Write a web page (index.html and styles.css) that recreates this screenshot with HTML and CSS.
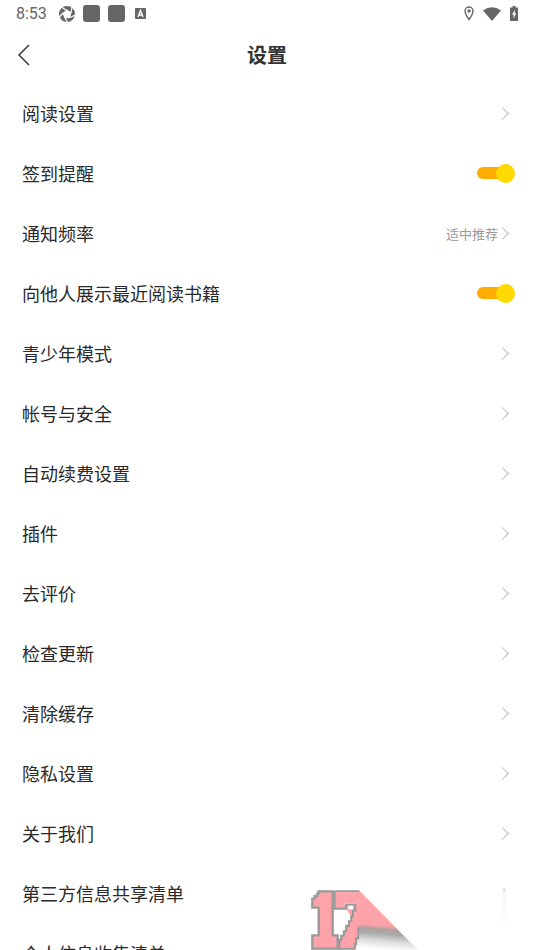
FILE: index.html
```html
<!DOCTYPE html>
<html lang="zh-CN">
<head>
<meta charset="utf-8">
<meta name="viewport" content="width=device-width, initial-scale=1">
<title>设置</title>
<link rel="stylesheet" href="styles.css">
</head>
<body>
<div class="status">
  <span class="time">8:53</span>
  <svg class="ic16" viewBox="0 0 16 16"><circle cx="8" cy="8" r="5.500" fill="none" stroke="#666" stroke-width="5"/><path d="m8 3.500 4.500 3-1.500 5.500-5.500.500L3.500 7z" fill="#fff"/><path d="M8 4.500 3 1.500M12 7l1-6M11 11.500l5.500-2.500M6 12l3 5M4 7l-4 4.500" stroke="#fff" stroke-width="1.200"/></svg>
  <span class="block"></span>
  <span class="block"></span>
  <svg class="ic11" viewBox="0 0 11 11"><rect width="11" height="11" rx="1" fill="#666"/><path d="M3 9 5.500 2.500 8 9M4 7h3" fill="none" stroke="#fff" stroke-width="1.400"/></svg>
  <span class="system">
    <svg width="10" height="15" viewBox="0 0 10 15"><path d="M5 1a4 4 0 0 1 4 4c0 3-4 8.500-4 8.500S1 8 1 5a4 4 0 0 1 4-4z" fill="none" stroke="#666" stroke-width="1.400"/><circle cx="5" cy="5" r="1.700" fill="#666"/></svg>
    <svg width="18" height="14" viewBox="0 0 18 14"><path d="M0 3.500Q9-3 18 3.500L9 14z" fill="#666"/></svg>
    <svg width="8" height="15" viewBox="0 0 8 15"><path d="M2.500 0h3v1.500H8V15H0V1.500h2.500z" fill="#666"/><path d="M5 3.500 2 8.500h1.600V12.500L6.200 7.300H4.700z" fill="#fff"/></svg>
  </span>
</div>
<header class="bar">
  <button class="back" aria-label="返回"><svg width="12" height="22" viewBox="0 0 12 22"><path d="M11 1 1 11l10 10" fill="none" stroke="#333" stroke-width="1.500"/></svg></button>
  <h1>设置</h1>
</header>
<main class="list">
  <a class="row" href="#">阅读设置<i class="arrow"></i></a>
  <label class="row">签到提醒<input class="switch" type="checkbox" checked></label>
  <a class="row" href="#">通知频率<span class="value">适中推荐</span><i class="arrow"></i></a>
  <label class="row">向他人展示最近阅读书籍<input class="switch" type="checkbox" checked></label>
  <a class="row" href="#">青少年模式<i class="arrow"></i></a>
  <a class="row" href="#">帐号与安全<i class="arrow"></i></a>
  <a class="row" href="#">自动续费设置<i class="arrow"></i></a>
  <a class="row" href="#">插件<i class="arrow"></i></a>
  <a class="row" href="#">去评价<i class="arrow"></i></a>
  <a class="row" href="#">检查更新<i class="arrow"></i></a>
  <a class="row" href="#">清除缓存<i class="arrow"></i></a>
  <a class="row" href="#">隐私设置<i class="arrow"></i></a>
  <a class="row" href="#">关于我们<i class="arrow"></i></a>
  <a class="row" href="#">第三方信息共享清单</a>
  <a class="row" href="#">个人信息收集清单</a>
</main>
<svg class="badge" viewBox="0 0 732 240" role="img" aria-label="17">
  <defs>
    <linearGradient id="shade" gradientUnits="userSpaceOnUse" x1="250" y1="164" x2="244" y2="236">
      <stop offset="0" stop-color="#ffa3aa"/>
      <stop offset=".16" stop-color="#b0a0a0"/>
      <stop offset=".35" stop-color="#aaa"/>
      <stop offset=".65" stop-color="#ddd"/>
      <stop offset="1" stop-color="#fff"/>
    </linearGradient>
    <linearGradient id="wisp" x1="0" y1="0" x2="0" y2="1">
      <stop offset="0" stop-color="#ccc"/>
      <stop offset=".1" stop-color="#f6f6f6"/>
      <stop offset="1" stop-color="#fff"/>
    </linearGradient>
  </defs>
  <path d="M206 60 384 240H194V120z" fill="url(#shade)"/>
  <g fill="#ffa3aa" stroke="#999" stroke-width="7">
    <path d="M86 64H128V196H143V236H67V196H86V113H67V86H74V78H82V70H86z"/>
    <path d="M134 64H208M134 64V116H167V104H196V122H189V140H184V154H177V168H169V184H162V198H154V210H148V236H194V222H198V204H204V172"/>
  </g>
  <path d="M137 67H208V170H202V202H195V218H190V233H152V212H158V200H166V187H173V171H181V157H188V143H193V125H200V100H163V112H137z" fill="#ffa3aa"/>
  <path d="M175 107H189V118H175z" fill="#fff"/>
  <path d="M640 56h6l10 124h-26z" fill="url(#wisp)"/>
</svg>
</body>
</html>
```
FILE: styles.css
```css
* { box-sizing: border-box; }
body { position: relative; margin: 0; height: 100vh; overflow: hidden; background: #fff; color: #2a2a2a; font-family: "Noto Sans CJK SC", sans-serif; }
.status { display: flex; align-items: center; height: 27px; padding: 0 16px; color: #666; }
.time { width: 43px; font: 400 16px Roboto, sans-serif; }
.ic16 { width: 16px; height: 16px; margin-right: 8px; }
.block { width: 17px; height: 17px; margin-right: 8px; border-radius: 3px; background: #666; }
.ic11 { width: 11px; height: 11px; margin-left: 2px; }
.system { display: flex; align-items: center; gap: 9px; margin-left: auto; }
.bar { display: grid; grid-template-columns: 48px 1fr 48px; align-items: center; height: 56px; }
.back { display: flex; padding: 0 0 0 18px; border: 0; background: none; }
h1 { margin: 0; color: #333; font-size: 20px; line-height: 28px; font-weight: 700; text-align: center; }
.row { display: flex; align-items: center; height: 60px; padding: 0 24px 0 22px; color: inherit; font-size: 18px; text-decoration: none; }
.value { margin-left: auto; font-size: 13px; color: #999; }
.arrow { width: 9px; height: 9px; margin: 0 3px 0 auto; border: solid #bbb; border-width: 1px 1px 0 0; transform: rotate(45deg); }
.value + .arrow { margin-left: 0; }
.switch { appearance: none; display: flex; align-items: center; justify-content: flex-end; width: 37px; height: 12px; margin: 0 -4px 0 auto; border-radius: 6px; background: #ffab00; }
.switch::before { content: ""; width: 19px; height: 19px; margin-right: -1px; border-radius: 50%; background: #ffd900; }
.badge { position: absolute; right: 0; bottom: 0; width: 244px; height: 80px; pointer-events: none; }
```
